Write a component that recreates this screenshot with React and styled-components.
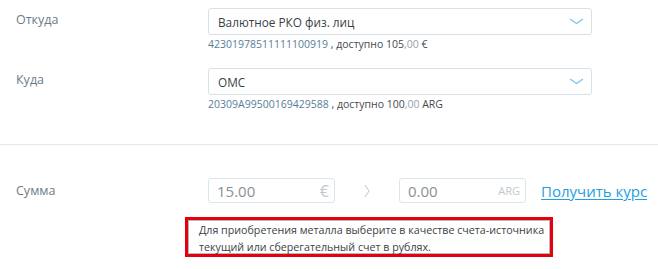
import React from "react";
import styled, { createGlobalStyle } from "styled-components";

const Global = createGlobalStyle`
  html, body { margin: 0; padding: 0; background: #fff; }
  body { font-family: "Open Sans", "Noto Sans", sans-serif; -webkit-font-smoothing: antialiased; }
  * { box-sizing: border-box; }
`;

const Page = styled.div`
  width: 658px;
  height: 269px;
  overflow: hidden;
  display: flex;
  flex-direction: column;
`;

const Section = styled.div`
  display: flex;
  flex-direction: column;
  gap: ${(p) => p.$gap || 0}px;
  padding-top: ${(p) => p.$top || 0}px;
`;

const Row = styled.div`
  display: flex;
  align-items: flex-start;
`;

const Label = styled.div`
  width: 208px;
  padding-left: 16px;
  font-size: 12.5px;
  line-height: ${(p) => p.$lh || 23}px;
  color: #6d7b89;
`;

const Field = styled.div`
  width: 384px;
  display: flex;
  flex-direction: column;
`;

const Select = styled.div`
  height: 27px;
  border: 1px solid #d6e1ea;
  border-radius: 3px;
  display: flex;
  align-items: center;
  justify-content: space-between;
  padding: 0 7px 0 9px;
  font-size: 11.8px;
  color: #3a3f45;
`;

const Account = styled.div`
  margin-top: 2px;
  font-size: 10.5px;
  line-height: 15px;
  color: #444a50;
`;

const AccNum = styled.span`
  color: #587d98;
`;

const Cents = styled.span`
  color: #9aa2a9;
`;

const Divider = styled.div`
  height: 1px;
  background: #e3e9ee;
  margin-top: ${(p) => p.$top}px;
`;

const AmountRow = styled.div`
  display: flex;
  align-items: center;
`;

const AmountInput = styled.div`
  width: 127px;
  height: 25px;
  border: 1px solid #dbe5ec;
  border-radius: 3px;
  display: flex;
  align-items: center;
  justify-content: space-between;
  padding: 0 5px 0 8px;
`;

const Value = styled.span`
  font-size: 15px;
  color: #8a9096;
`;

const Currency = styled.span`
  font-size: ${(p) => p.$size}px;
  color: #c2c8cd;
`;

const Arrow = styled.div`
  width: 64px;
  display: flex;
  justify-content: center;
  color: #b9c0c6;
`;

const RateLink = styled.a`
  margin-left: 15px;
  font-size: 15px;
  color: #239fdd;
  text-decoration: underline;
  text-underline-offset: 2px;
  cursor: pointer;
`;

const HintWrap = styled.div`
  margin-top: 14px;
  margin-left: 185px;
  width: 368px;
  height: 40px;
  border: 3px solid #e3000f;
  box-shadow: inset 0 0 0 1px #b8b8b8;
  padding: 2px 0 0 11px;
  font-size: 10.7px;
  line-height: 17px;
  white-space: nowrap;
  color: #3a3f45;
`;

const Chevron = () => (
  <svg width="15" height="7" viewBox="0 0 15 7" fill="none">
    <path d="M1 1 L7.5 5.5 L14 1" stroke="#7fc6ec" strokeWidth="1.4" />
  </svg>
);

const SmallArrow = () => (
  <svg width="6" height="14" viewBox="0 0 6 14" fill="none">
    <path d="M1 1 L5 7 L1 13" stroke="#bfc5ca" strokeWidth="1" />
  </svg>
);

const accounts = [
  { label: "Откуда", name: "Валютное РКО физ. лиц", num: "42301978511111100919", whole: "105", cur: "€" },
  { label: "Куда", name: "ОМС", num: "20309A99500169429588", whole: "100", cur: "ARG" },
];

export default function App() {
  return (
    <Page>
      <Global />
      <Section $top={8} $gap={16}>
        {accounts.map((a) => (
          <Row key={a.label}>
            <Label $lh={23}>{a.label}</Label>
            <Field>
              <Select>
                <span>{a.name}</span>
                <Chevron />
              </Select>
              <Account>
                <AccNum>{a.num}</AccNum> , доступно {a.whole}
                <Cents>,00</Cents> {a.cur}
              </Account>
            </Field>
          </Row>
        ))}
      </Section>
      <Divider $top={32} />
      <Section $top={33}>
        <AmountRow>
          <Label $lh={25}>Сумма</Label>
          <AmountInput>
            <Value>15.00</Value>
            <Currency $size={16}>€</Currency>
          </AmountInput>
          <Arrow>
            <SmallArrow />
          </Arrow>
          <AmountInput>
            <Value>0.00</Value>
            <Currency $size={11}>ARG</Currency>
          </AmountInput>
          <RateLink>Получить курс</RateLink>
        </AmountRow>
        <HintWrap>
          Для приобретения металла выберите в качестве счета-источника
          <br />
          текущий или сберегательный счет в рублях.
        </HintWrap>
      </Section>
    </Page>
  );
}
